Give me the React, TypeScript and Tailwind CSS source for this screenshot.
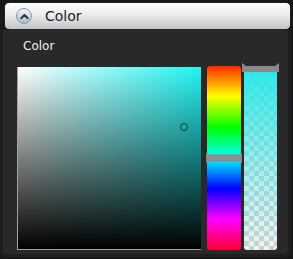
import React from "react";

export default function App() {
  return (
    <div
      className="w-[293px] h-[259px] bg-[#151718] flex flex-col overflow-hidden"
      style={{ fontFamily: '"DejaVu Sans", sans-serif' }}
    >
      <div className="ml-[4px] mt-[2px] w-[287px] h-[28px] rounded-[5px] border border-[#18252b] bg-[linear-gradient(to_bottom,#ffffff,#ececec_45%,#c4c4c4)] flex items-center shrink-0">
        <div className="ml-[11px] w-[16px] h-[16px] rounded-full border border-[#8797a4] bg-[linear-gradient(to_bottom,#f4f7f9,#aebcc7)] flex items-center justify-center">
          <svg width="9" height="7" viewBox="0 0 9 7">
            <path d="M1.2 5.2 L4.5 2 L7.8 5.2" fill="none" stroke="#1d3550" strokeWidth="1.9" strokeLinecap="round" strokeLinejoin="round" />
          </svg>
        </div>
        <span className="ml-[13px] text-[14px] leading-none text-[#1c1c1c]">Color</span>
      </div>
      <div className="flex-1 mr-[2px] mb-[2px] rounded-b-[6px] border-[3px] border-t-0 border-[#1f1f1f] bg-[#292929] flex flex-col">
        <div className="ml-[20px] mt-[9px] text-[12px] leading-[14px] text-[#f2f2f2]">Color</div>
        <div className="ml-[14px] mt-[14px] flex items-start">
          <div className="relative w-[184px] h-[183px] border-l border-b border-[#a3a3a3] bg-[linear-gradient(to_top,#000000,rgba(0,0,0,0)),linear-gradient(to_right,#ffffff,#22f4f4)]">
            <div className="absolute left-[162px] top-[56px] w-[8px] h-[8px] rounded-full border-[1.5px] border-[#1a3535]" />
          </div>
          <div className="relative ml-[6px] w-[34px] h-[184px] -mt-[1px] rounded-[3px] bg-[linear-gradient(to_bottom,#ff2a00,#ffff00_16.6%,#00ff00_33.3%,#00ffff_50%,#0000ff_66.6%,#ff00ff_83.3%,#ff0033)]">
            <svg className="absolute left-[-1px] top-[87px]" width="36" height="10" viewBox="0 0 36 10">
              <path d="M0 0 L3 1.5 L33 1.5 L36 0 L36 10 L33 8.5 L3 8.5 L0 10 Z" fill="#8a8a8a" />
              <rect x="3" y="3" width="30" height="4" fill="#8f8f8f" />
            </svg>
          </div>
          <div className="relative ml-[3px] w-[33px] h-[184px] -mt-[1px] rounded-[3px] overflow-visible">
            <div className="absolute inset-0 rounded-[3px] bg-[repeating-conic-gradient(#c9d2d2_0_25%,#f2f2f2_0_50%)] bg-[length:10px_10px]" />
            <div className="absolute inset-0 rounded-[3px] bg-[linear-gradient(to_bottom,#2ae8e8,rgba(42,232,232,0.35)_60%,rgba(42,232,232,0))]" />
            <svg className="absolute left-[-2px] top-[-3px]" width="37" height="9" viewBox="0 0 37 9">
              <path d="M0 0 L4 3 L33 3 L37 0 L37 9 L0 9 Z" fill="#8a8a8a" />
            </svg>
            <div className="absolute left-[2px] right-[2px] top-[6px] h-[3px] bg-[#2ae8e8]" />
          </div>
        </div>
      </div>
    </div>
  );
}
